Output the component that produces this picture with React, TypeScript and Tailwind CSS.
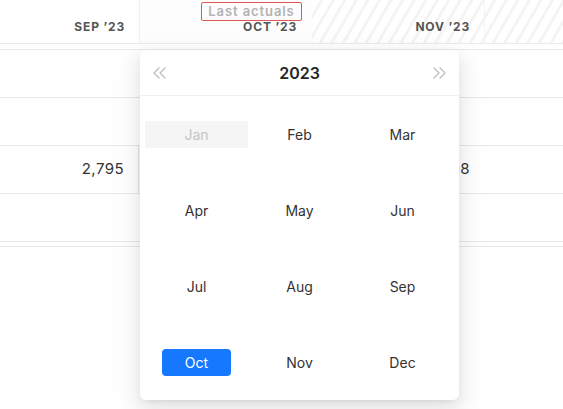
import React from "react";

const months = [
  ["Jan", "Feb", "Mar"],
  ["Apr", "May", "Jun"],
  ["Jul", "Aug", "Sep"],
  ["Oct", "Nov", "Dec"],
];

function DoubleChevron({ dir }: { dir: "left" | "right" }) {
  const d =
    dir === "left"
      ? "M7 1 L2 6 L7 11 M13 1 L8 6 L13 11"
      : "M2 1 L7 6 L2 11 M8 1 L13 6 L8 11";
  return (
    <svg width="15" height="12" viewBox="0 0 15 12" fill="none">
      <path d={d} stroke="#bdbdbd" strokeWidth="1.3" strokeLinecap="round" strokeLinejoin="round" />
    </svg>
  );
}

function MonthPanel() {
  return (
    <div className="absolute left-[140px] top-[50px] w-[319px] rounded-[6px] bg-white shadow-[0_6px_16px_0_rgba(0,0,0,0.08),0_3px_6px_-4px_rgba(0,0,0,0.12),0_9px_28px_8px_rgba(0,0,0,0.05)]">
      {/* Header */}
      <div className="flex h-[46px] items-center justify-between border-b border-[#f0f0f0] px-[12px]">
        <DoubleChevron dir="left" />
        <span className="text-[16px] font-semibold text-[#262626]">2023</span>
        <DoubleChevron dir="right" />
      </div>

      {/* Months */}
      <div className="grid grid-cols-3 px-[5px]">
        {months.flat().map((m) => {
          const disabled = m === "Jan";
          const selected = m === "Oct";
          return (
            <div key={m} className="flex h-[76px] items-center justify-center">
              {disabled ? (
                <div className="flex h-[27px] w-full items-center justify-center bg-[#f5f5f5] text-[14px] text-[#c4c4c4]">
                  {m}
                </div>
              ) : (
                <div
                  className={
                    selected
                      ? "flex h-[27px] w-[69px] items-center justify-center rounded-[4px] bg-[#1677ff] text-[14px] text-white"
                      : "flex h-[27px] w-[69px] items-center justify-center text-[14px] text-[#333333]"
                  }
                >
                  {m}
                </div>
              )}
            </div>
          );
        })}
      </div>
    </div>
  );
}

function BodyRow({ left, nov, highlight }: { left?: string; nov?: string; highlight?: boolean }) {
  return (
    <div className="flex h-[48px] border-b border-[#e8e8e8] text-[15px] tracking-[0.03em] text-[#333333]">
      <div
        className={
          highlight
            ? "flex w-[139px] items-center justify-end border-r border-[#e3e3e3] pr-[14px]"
            : "flex w-[139px] items-center justify-end pr-[14px]"
        }
      >
        {left}
      </div>
      <div className="w-[173px]" />
      <div className="flex w-[172px] items-center justify-end pr-[14px]">{nov}</div>
      <div className="flex-1" />
    </div>
  );
}

export default function App() {
  return (
    <div
      className="relative h-[409px] w-full overflow-hidden bg-white"
      style={{ fontFamily: "Inter, 'Noto Sans', sans-serif" }}
    >
      {/* Column header */}
      <div className="flex h-[44px] border-b border-[#ebebeb] text-[12px] font-bold leading-none tracking-[0.07em] text-[#555555]">
        <div className="flex w-[139px] items-end justify-end pb-[10px] pr-[14px]">SEP ’23</div>
        <div className="flex w-[173px] items-end justify-end border-l border-[#f0f0f0] bg-[#fdfdfd] pb-[10px] pr-[15px]">
          OCT ’23
        </div>
        <div className="flex w-[172px] items-end justify-end bg-[repeating-linear-gradient(120deg,#ffffff_0px,#ffffff_7px,#f4f4f4_7px,#f4f4f4_10px)] pb-[10px] pr-[14px]">
          NOV ’23
        </div>
        <div className="flex-1 border-l border-[#f3f3f3] bg-[repeating-linear-gradient(120deg,#ffffff_0px,#ffffff_7px,#f4f4f4_7px,#f4f4f4_10px)]" />
      </div>

      {/* Label over Oct */}
      <div className="absolute left-[201px] top-[2px] flex h-[19px] w-[101px] items-center justify-center rounded-[2px] border-[1.5px] border-[#e25555] text-[13px] font-semibold leading-none tracking-[0.07em] text-[#b3b3b3]">
        Last actuals
      </div>

      {/* Body */}
      <div className="mt-[5px] border-t border-[#ebebeb]">
        <BodyRow />
        <BodyRow />
        <BodyRow left="2,795" nov="3,708" highlight />
        <BodyRow />
        <div className="h-[5px] border-b border-[#e8e8e8]" />
      </div>

      <MonthPanel />
    </div>
  );
}
